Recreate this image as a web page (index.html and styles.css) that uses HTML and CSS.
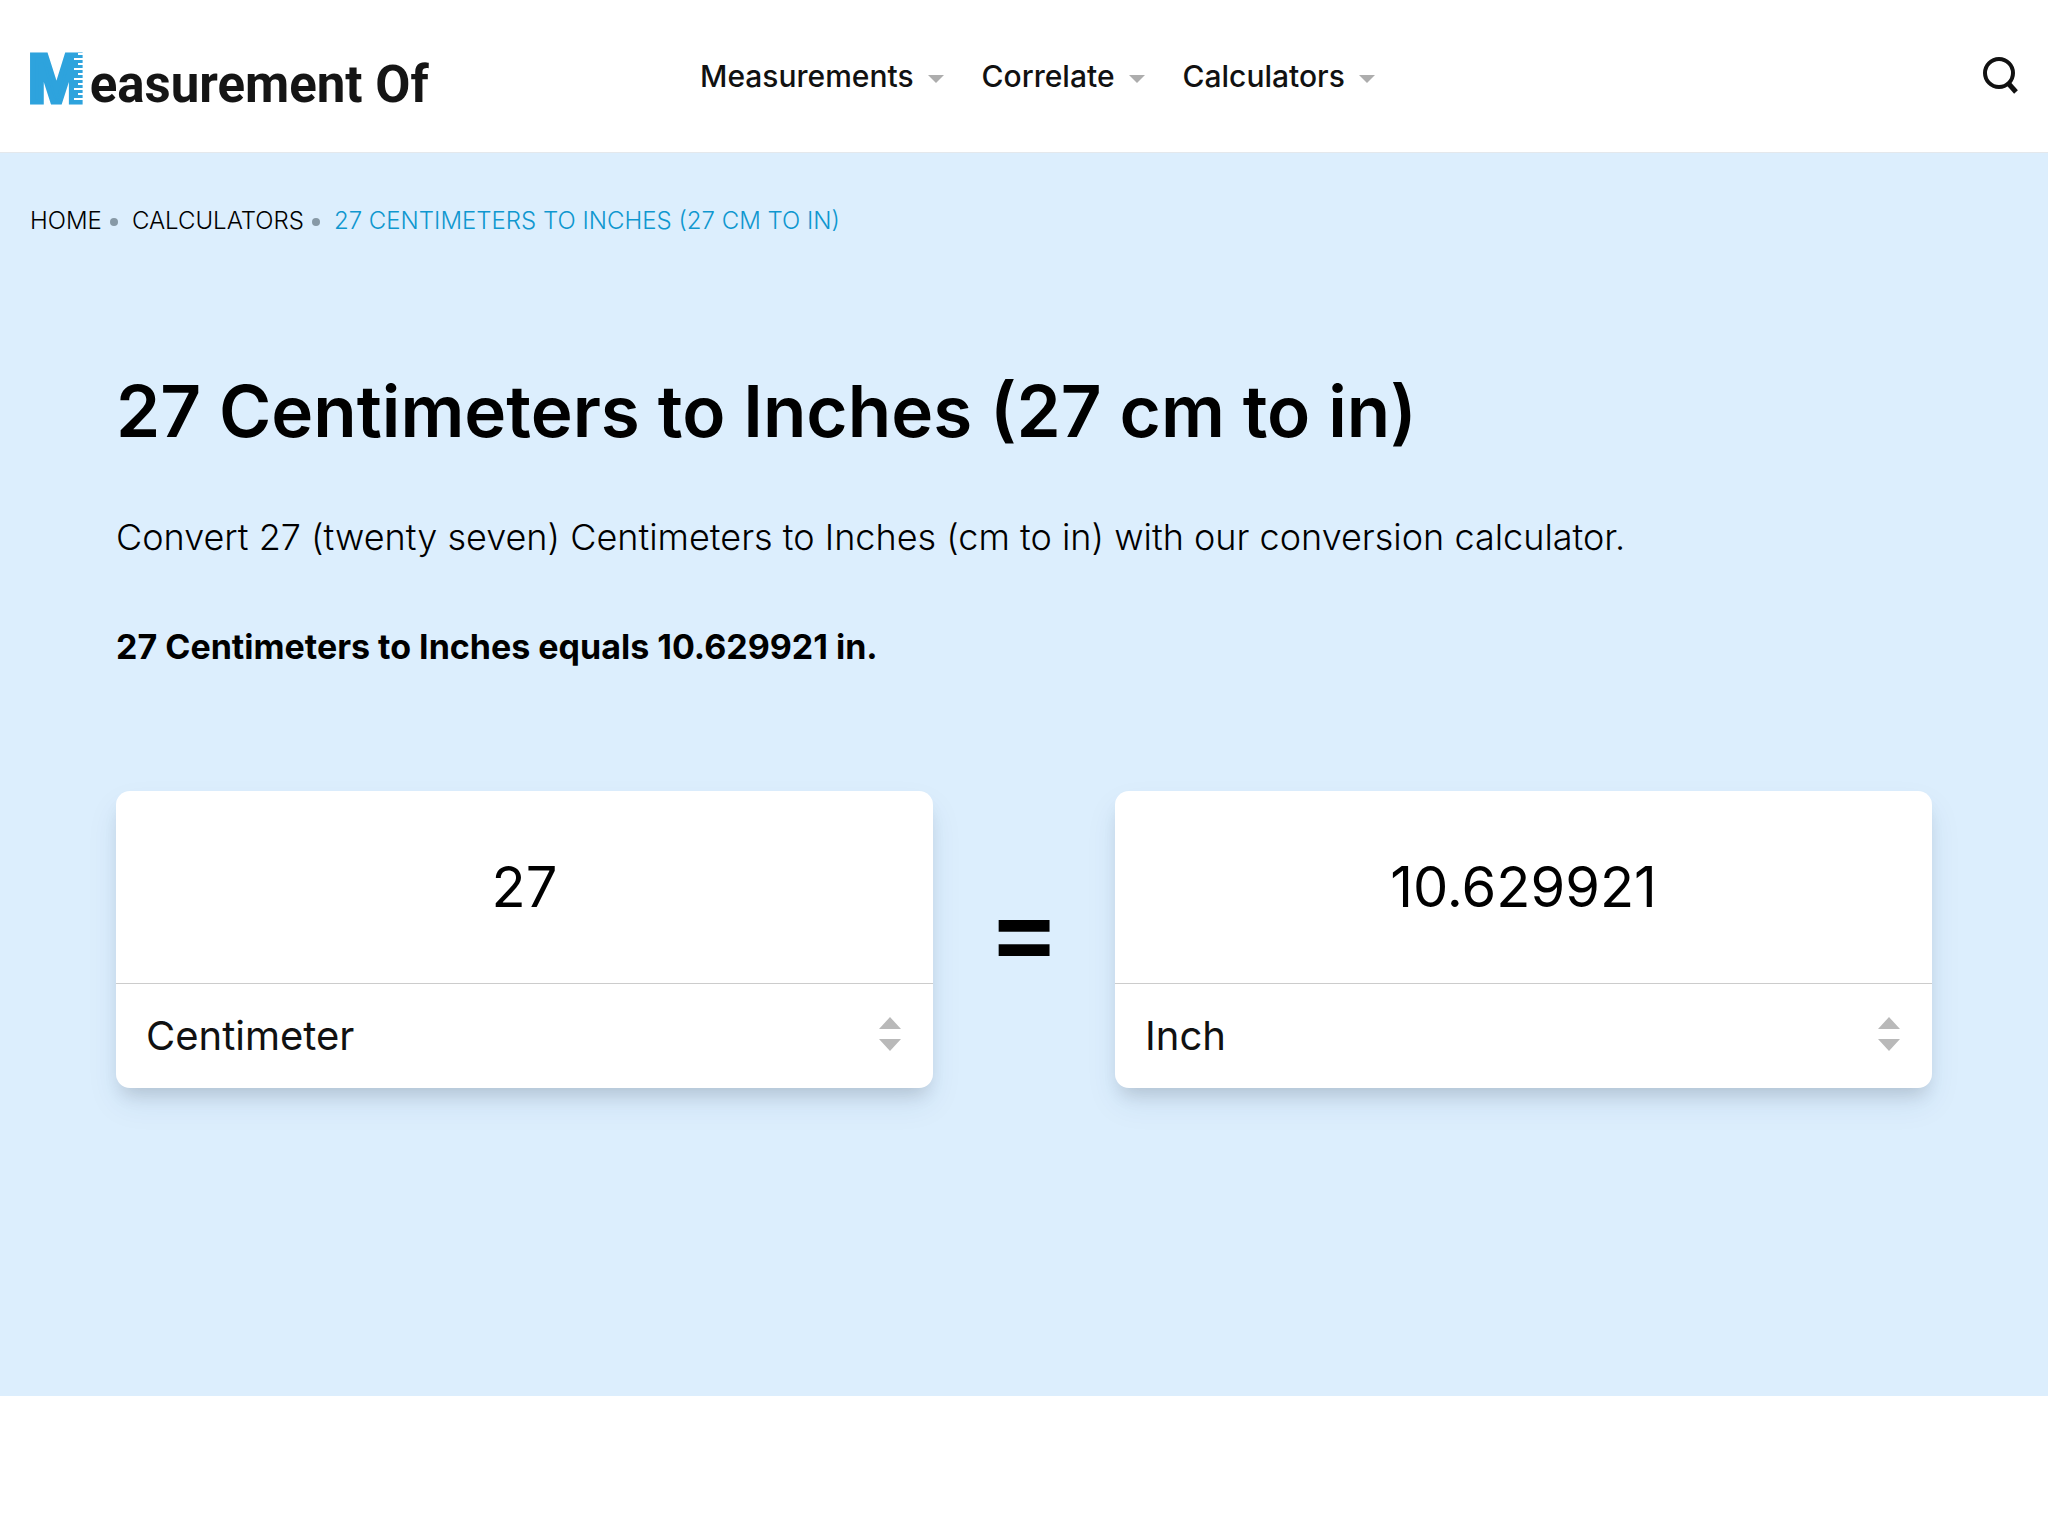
FILE: index.html
```
<!DOCTYPE html>
<html lang="en">
<head>
<meta charset="utf-8">
<meta name="viewport" content="width=device-width, initial-scale=1">
<title>27 Centimeters to Inches (27 cm to in)</title>
<link rel="stylesheet" href="styles.css">
</head>
<body>
<header class="header">
  <a class="logo" href="#"><span class="logo-mark">M<svg class="logo-ruler" width="12" height="52" viewBox="0 0 12 52" aria-hidden="true"><path d="M5 4h7M1 9h11M5 14h7M1 19h11M5 24h7M1 29h11M5 34h7M1 39h11M5 44h7M1 49h11" stroke="#fff" stroke-width="2"/></svg></span><span class="logo-text">easurement Of</span></a>
  <nav class="nav" aria-label="Main">
    <a class="nav-link" href="#">Measurements<span class="caret"></span></a>
    <a class="nav-link" href="#">Correlate<span class="caret"></span></a>
    <a class="nav-link" href="#">Calculators<span class="caret"></span></a>
  </nav>
  <button class="search" type="button" aria-label="Search">
    <svg width="36" height="40" viewBox="0 0 36 40" aria-hidden="true"><circle cx="17" cy="17" r="14" fill="none" stroke="#111" stroke-width="4"/><path d="M26 27l8 9" fill="none" stroke="#111" stroke-width="5"/></svg>
  </button>
</header>
<main class="hero">
  <nav aria-label="Breadcrumb">
    <ol class="crumbs">
      <li class="crumb"><a href="#">HOME</a></li>
      <li class="crumb"><a href="#">CALCULATORS</a></li>
      <li class="crumb crumb-current">27 CENTIMETERS TO INCHES (27 CM TO IN)</li>
    </ol>
  </nav>
  <div class="content">
    <h1 class="title">27 Centimeters to Inches (27 cm to in)</h1>
    <p class="lead">Convert 27 (twenty seven) Centimeters to Inches (cm to in) with our conversion calculator.</p>
    <p class="result">27 Centimeters to Inches equals 10.629921 in.</p>
    <form class="converter">
      <div class="card">
        <input class="value" type="text" value="27" aria-label="Centimeters">
        <div class="unit">
          <select class="unit-select" aria-label="From unit"><option>Centimeter</option></select>
          <svg class="arrows" width="22" height="34" viewBox="0 0 22 34" aria-hidden="true"><path d="M11 0l11 12H0zM0 22h22L11 34z" fill="#b9b9b9"/></svg>
        </div>
      </div>
      <span class="equals">=</span>
      <div class="card">
        <input class="value" type="text" value="10.629921" aria-label="Inches">
        <div class="unit">
          <select class="unit-select" aria-label="To unit"><option>Inch</option></select>
          <svg class="arrows" width="22" height="34" viewBox="0 0 22 34" aria-hidden="true"><path d="M11 0l11 12H0zM0 22h22L11 34z" fill="#b9b9b9"/></svg>
        </div>
      </div>
    </form>
  </div>
</main>
</body>
</html>
```
FILE: styles.css
```
* { box-sizing: border-box; }

body {
  margin: 0;
  background: #fff;
  color: #000;
  font-family: Inter, "Liberation Sans", sans-serif;
}

a { color: inherit; text-decoration: none; }

.header {
  display: flex;
  align-items: center;
  min-height: 153px;
  padding: 0 30px 0 28px;
  border-bottom: 1px solid #e4e8ec;
}

.logo {
  display: flex;
  flex: 0 0 672px;
  gap: 5px;
  align-items: baseline;
  padding-top: 10px;
  line-height: 72px;
}

.logo-mark {
  position: relative;
  color: #2ea3dd;
  font-family: "Liberation Sans", Arial, sans-serif;
  font-size: 68px;
  font-weight: 700;
  -webkit-text-stroke: 5px #2ea3dd;
}

.logo-ruler {
  position: absolute;
  right: 0;
  bottom: 12px;
}

.logo-text {
  color: #151515;
  font-family: Roboto, sans-serif;
  font-size: 51px;
  font-weight: 700;
}

.nav {
  display: flex;
  flex: 1;
  gap: 38px;
}

.nav-link {
  display: flex;
  gap: 14px;
  align-items: center;
  color: #111;
  font-size: 30px;
  font-weight: 500;
  line-height: 48px;
}

.caret {
  margin-top: 6px;
  border-top: 8px solid #adadad;
  border-right: 8px solid transparent;
  border-left: 8px solid transparent;
}

.search {
  display: flex;
  padding: 0;
  border: 0;
  background: none;
}

.hero {
  padding: 50px 30px 308px;
  background: #dceefd;
}

.crumbs {
  display: flex;
  margin: 0;
  padding: 0;
  list-style: none;
  font-size: 24px;
  font-weight: 300;
  line-height: 36px;
}

.crumb {
  display: flex;
  align-items: center;
}

.crumb:not(:last-child)::after {
  width: 8px;
  height: 8px;
  margin: 2px 14px 0 8px;
  border-radius: 50%;
  background: #8799a6;
  content: "";
}

.crumb-current { color: #0f97cf; }

.content { padding: 0 86px; }

.title {
  margin: 130px 0 57px;
  font-size: 71px;
  font-weight: 600;
  line-height: 84px;
}

.lead,
.result {
  margin: 0 0 56px;
  font-size: 36px;
  font-weight: 300;
  line-height: 54px;
}

.result {
  margin-bottom: 117px;
  font-size: 34px;
  font-weight: 700;
}

.converter {
  display: grid;
  grid-template-columns: 1fr 182px 1fr;
  align-items: center;
}

.card {
  overflow: hidden;
  border-radius: 14px;
  background: #fff;
  box-shadow: 0 16px 32px rgba(20, 60, 120, 0.08), 0 12px 18px -6px rgba(0, 0, 0, 0.14);
}

.value {
  display: block;
  width: 100%;
  height: 192px;
  padding: 0 32px;
  border: 0;
  background: none;
  color: #000;
  font-family: inherit;
  font-size: 56px;
  font-weight: 400;
  text-align: center;
}

.unit {
  display: grid;
  align-items: center;
  border-top: 1px solid #ccc;
}

.unit-select,
.arrows { grid-area: 1 / 1; }

.unit-select {
  width: 100%;
  height: 104px;
  padding: 0 64px 2px 30px;
  border: 0;
  appearance: none;
  background: none;
  color: #111;
  font-family: inherit;
  font-size: 40px;
  font-weight: 400;
}

.arrows {
  justify-self: end;
  margin: 0 32px 4px 0;
  pointer-events: none;
}

.equals {
  padding-bottom: 20px;
  font-size: 108px;
  font-weight: 600;
  line-height: 96px;
  text-align: center;
}
```
